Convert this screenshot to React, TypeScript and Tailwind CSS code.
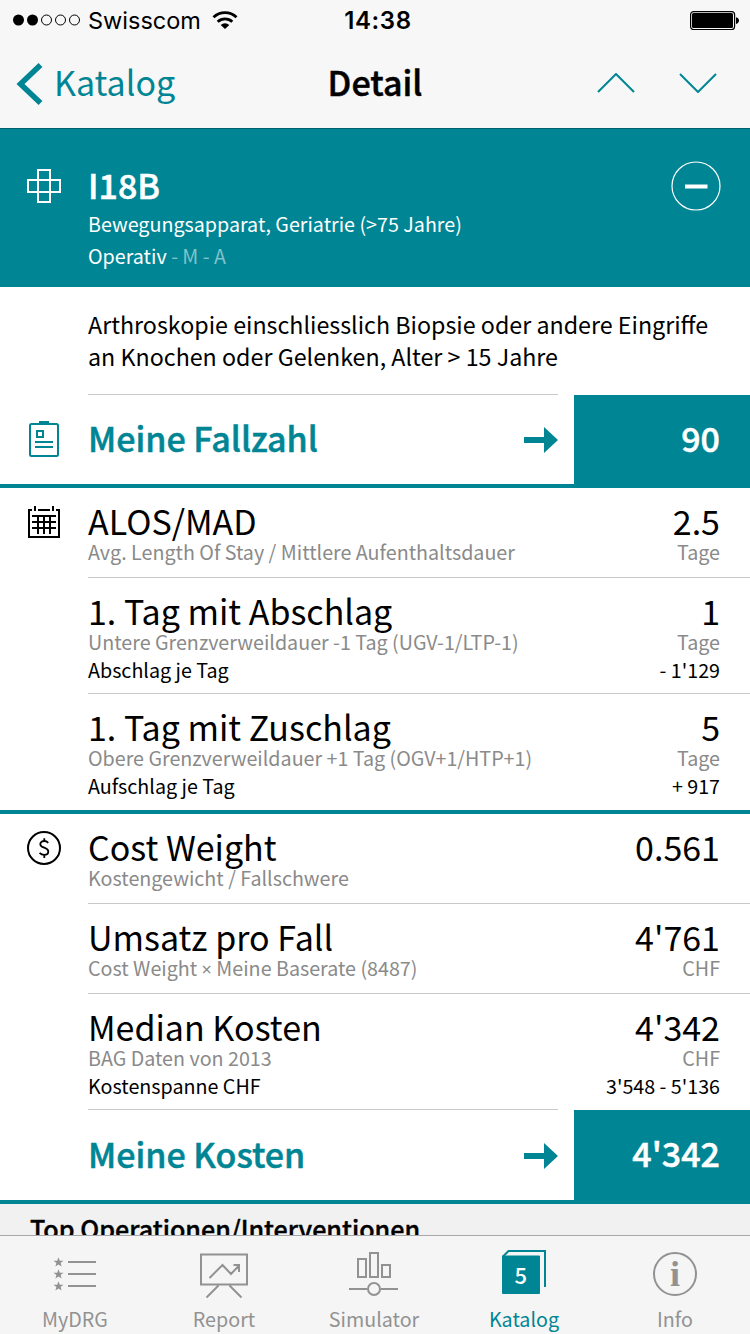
import type { ReactNode } from "react";

// ── Data ─────────────────────────────────────────────────────────────────────
type Row = {
  title: string;
  sub: ReactNode;
  value: string;
  unit?: string;
  extra?: [string, string];
};

const STAY_ROWS: Row[] = [
  {
    title: "ALOS/MAD",
    sub: "Avg. Length Of Stay / Mittlere Aufenthaltsdauer",
    value: "2.5",
    unit: "Tage",
  },
  {
    title: "1. Tag mit Abschlag",
    sub: "Untere Grenzverweildauer -1 Tag (UGV-1/LTP-1)",
    value: "1",
    unit: "Tage",
    extra: ["Abschlag je Tag", "- 1'129"],
  },
  {
    title: "1. Tag mit Zuschlag",
    sub: "Obere Grenzverweildauer +1 Tag (OGV+1/HTP+1)",
    value: "5",
    unit: "Tage",
    extra: ["Aufschlag je Tag", "+ 917"],
  },
];

const COST_ROWS: Row[] = [
  { title: "Cost Weight", sub: "Kostengewicht / Fallschwere", value: "0.561" },
  {
    title: "Umsatz pro Fall",
    // the CJK family draws × full width, so take it from a latin one
    sub: (
      <>
        Cost Weight <span className="font-['Noto_Sans',sans-serif] text-[18px] leading-none">×</span> Meine Baserate
        (8487)
      </>
    ),
    value: "4'761",
    unit: "CHF",
  },
  {
    title: "Median Kosten",
    sub: "BAG Daten von 2013",
    value: "4'342",
    unit: "CHF",
    extra: ["Kostenspanne CHF", "3'548 - 5'136"],
  },
];

// ── Icons ────────────────────────────────────────────────────────────────────
function CrossIcon() {
  return (
    <svg width="36" height="36" viewBox="0 0 36 36" fill="none" stroke="white" strokeWidth="2">
      <path d="M12 2h12v32H12zM2 12h32v12H2z" />
    </svg>
  );
}

function ClipboardIcon() {
  return (
    <svg width="32" height="38" viewBox="0 0 32 38" fill="none" stroke="#008594" strokeWidth="2">
      <rect x="2" y="4" width="28" height="32" rx="1.5" />
      <path d="M11 2.500h10" strokeWidth="3" />
      <path d="M9 11h6v6H9zM7 22h18M7 27h18" />
    </svg>
  );
}

function CalendarIcon() {
  return (
    <svg width="32" height="32" viewBox="0 0 32 32" fill="none" stroke="black" strokeWidth="2">
      <path d="M4 4H1v27h30V4h-3M10 4h12M7 0v5M25 0v5" />
      <path d="M4 10h24M4 16h24M4 22h24M10 10v18M16 10v18M22 10v18" />
    </svg>
  );
}

function DollarIcon() {
  return (
    <svg width="34" height="34" viewBox="0 0 34 34">
      <circle cx="17" cy="17" r="16" fill="none" stroke="black" strokeWidth="2" />
      <path
        d="M21.2 11.800c-1-1.200-2.400-1.800-4-1.800-2.200 0-3.900 1.300-3.900 3.200 0 4.200 8 2.800 8 7.200 0 2-1.700 3.400-4.100 3.400-1.900 0-3.400-.7-4.600-2M17.300 7.200V10M17.300 24v3"
        fill="none"
        stroke="black"
        strokeWidth="1.800"
      />
    </svg>
  );
}

function ArrowIcon() {
  return (
    <svg width="34" height="26" viewBox="0 0 34 26" fill="#008594">
      <path d="M0 10h20V0l14 13-14 13V16H0z" />
    </svg>
  );
}

// ── Tab bar icons, all drawn on a 52x50 grid ─────────────────────────────────
const STAR = "M0-5 1.300-1.600 5-1.500 2.100.7 3.100 4.300 0 2.200-3.100 4.300-2.100.7-5-1.500-1.300-1.600z";

const TABS: { label: string; active?: boolean; icon: ReactNode }[] = [
  {
    label: "MyDRG",
    icon: (
      <>
        {[12, 24, 36].map((y) => (
          <g key={y}>
            <path d={STAR} transform={`translate(9.500 ${y + 0.3})`} fill="currentColor" stroke="none" />
            <path d={`M19 ${y}h28`} />
          </g>
        ))}
      </>
    ),
  },
  {
    label: "Report",
    icon: (
      <>
        <path d="M3 4.500h46v30H3zM20.500 35.500 8.500 47.500M31.500 35.500l12 12" />
        <path d="M11.500 28 24.500 15l8.500 9 8.500-9M35.500 15H41v7" />
      </>
    ),
  },
  {
    label: "Simulator",
    icon: (
      <>
        <path d="M10 9h8v18h-8zM22 3h8v24h-8zM34 15h8v12h-8zM1 39h18M33 39h17" />
        <circle cx="26" cy="39" r="6" />
      </>
    ),
  },
  {
    label: "Katalog",
    active: true,
    icon: (
      <>
        <rect x="4" y="5.500" width="38" height="38.500" rx="1" fill="currentColor" stroke="none" />
        <path d="M5 6.500 10.500 1H47v36" />
        <text
          x="22.800"
          y="34"
          textAnchor="middle"
          fill="white"
          stroke="none"
          className="font-['Noto_Sans_CJK_SC',sans-serif] text-[22px] font-medium"
        >
          5
        </text>
      </>
    ),
  },
  {
    label: "Info",
    icon: (
      <>
        <circle cx="26" cy="24" r="21" />
        <text
          x="26"
          y="36"
          textAnchor="middle"
          fill="currentColor"
          stroke="none"
          className="font-['Liberation_Serif',serif] text-[36px] font-bold"
        >
          i
        </text>
      </>
    ),
  },
];

// ── Building blocks ──────────────────────────────────────────────────────────
function StatusBar() {
  return (
    <div className="grid h-10 grid-cols-3 items-center font-['Inter',sans-serif] text-2xl leading-[38px]">
      <div className="flex items-center pl-[13px]">
        <svg width="68" height="12" viewBox="0 0 68 12" className="mr-[7px] shrink-0">
          <circle cx="5.500" cy="6" r="5.500" />
          <circle cx="19.500" cy="6" r="5.500" />
          {[33.5, 47.5, 61.5].map((cx) => (
            <circle key={cx} cx={cx} cy="6" r="5" fill="none" stroke="black" />
          ))}
        </svg>
        <span className="pt-0.5 text-[23.500px]">Swisscom</span>
        <svg width="26" height="20" viewBox="0 0 26 20" className="ml-[11px] shrink-0">
          <g fill="none" stroke="black" strokeWidth="2.800">
            <path d="M1.500 7.300a16.500 16.500 0 0 1 23 0" />
            <path d="M5.700 11.800a10.600 10.600 0 0 1 14.600 0" />
          </g>
          <path d="M13 19 8.700 14.900a6.300 6.300 0 0 1 8.600 0z" />
        </svg>
      </div>
      <div className="pt-0.5 pl-[6px] text-center font-semibold tracking-wide">14:38</div>
      <div className="flex justify-end pr-[11px]">
        <svg width="49" height="20" viewBox="0 0 49 20">
          <rect x=".600" y="1.600" width="44" height="18" rx="3" fill="none" stroke="black" strokeWidth="1.200" />
          <rect x="2" y="3" width="41" height="15" rx="1.500" />
          <path d="M46 7.200c2 .5 3 1.800 3 3.400s-1 2.900-3 3.400z" />
        </svg>
      </div>
    </div>
  );
}

function NavBar() {
  return (
    <div className="grid h-[88px] grid-cols-3 items-center">
      <div className="flex items-center gap-[11px] pl-4 text-[#008594]">
        <svg width="27" height="42" viewBox="0 0 27 42" fill="none" stroke="currentColor" strokeWidth="5.500">
          <path d="M24.500 2 4.500 21l20 19" />
        </svg>
        <span className="pb-[5px] text-[34px] leading-[38px]">Katalog</span>
      </div>
      <div className="pb-[5px] text-center text-[34px] leading-[38px] font-medium [-webkit-text-stroke:0.5px]">
        Detail
      </div>
      <div className="flex justify-end gap-11 pr-[33px] pb-0.5">
        <svg width="38" height="20" viewBox="0 0 38 20" fill="none" stroke="#008594" strokeWidth="2">
          <path d="M1 19 19 1l18 18" />
        </svg>
        <svg width="38" height="20" viewBox="0 0 38 20" fill="none" stroke="#008594" strokeWidth="2">
          <path d="M1 1l18 18L37 1" />
        </svg>
      </div>
    </div>
  );
}

function DetailRow({ row, last }: { row: Row; last?: boolean }) {
  return (
    <div
      className={`pt-3.5 pr-[30px] ${row.extra ? "h-[116px]" : "h-[90px]"} ${
        last ? "" : "border-b border-[#c8c7cc]"
      }`}
    >
      <div className="flex justify-between text-[34px] leading-[38px]">
        <span>{row.title}</span>
        <span>{row.value}</span>
      </div>
      <div className="flex justify-between text-[19.700px] leading-[23px] text-[#8a8a8a]">
        <span>{row.sub}</span>
        <span>{row.unit}</span>
      </div>
      {row.extra && (
        <div className="flex justify-between text-[19.700px] leading-[33px]">
          <span>{row.extra[0]}</span>
          <span>{row.extra[1]}</span>
        </div>
      )}
    </div>
  );
}

function LinkRow({ icon, label, value, tall }: { icon?: ReactNode; label: string; value: string; tall?: boolean }) {
  return (
    <div
      className={`flex border-b-4 border-[#008594] text-[34px] leading-[38px] font-medium [-webkit-text-stroke:0.5px] ${
        tall ? "h-[95px]" : "h-[94px]"
      }`}
    >
      <div className="flex w-[88px] justify-center pt-[26px]">{icon}</div>
      <div
        className={`flex w-[470px] items-center justify-between border-t border-[#c8c7cc] text-[#008594] ${
          tall ? "h-[93px]" : "h-[91px]"
        }`}
      >
        <span className="pb-[5px]">{label}</span>
        <ArrowIcon />
      </div>
      <div
        className={`mt-px ml-4 flex flex-1 items-center justify-end bg-[#008594] pr-[30px] text-white ${
          tall ? "pb-[5px]" : "pb-1"
        }`}
      >
        {value}
      </div>
    </div>
  );
}

function Section({ icon, rows }: { icon: ReactNode; rows: Row[] }) {
  return (
    <div className="flex">
      <div className="flex w-[88px] shrink-0 justify-center">{icon}</div>
      <div className="flex-1">
        {rows.map((row, i) => (
          <DetailRow key={row.title} row={row} last={i === rows.length - 1} />
        ))}
      </div>
    </div>
  );
}

// ── Screen ───────────────────────────────────────────────────────────────────
export default function App() {
  return (
    <div className="flex h-[1334px] w-[750px] flex-col overflow-hidden bg-white font-['Noto_Sans_CJK_SC',sans-serif] text-black">
      <header className="bg-[#f7f7f7]">
        <StatusBar />
        <NavBar />
      </header>

      {/* DRG header */}
      <div className="flex h-[159px] shrink-0 border-t border-[#00606b] bg-[#008594] text-white">
        <div className="flex w-[88px] justify-center pt-[39px]">
          <CrossIcon />
        </div>
        <div className="flex-1 pt-[37px]">
          <div className="text-[34px] leading-[38px] font-medium [-webkit-text-stroke:0.5px]">I18B</div>
          <div className="pt-1 text-[19.700px] leading-8">Bewegungsapparat, Geriatrie (&gt;75 Jahre)</div>
          <div className="text-[19.700px] leading-8">
            Operativ <span className="text-white/50">- M - A</span>
          </div>
        </div>
        <div className="pt-8 pr-[29px]">
          <svg width="50" height="50" viewBox="0 0 50 50" fill="none" stroke="white">
            <circle cx="25" cy="25" r="24" strokeWidth="1.200" />
            <path d="M14 25.500h22.500" strokeWidth="4" />
          </svg>
        </div>
      </div>

      <p className="h-[107px] shrink-0 pt-[21px] pl-[88px] text-[23.250px] leading-8">
        Arthroskopie einschliesslich Biopsie oder andere Eingriffe
        <br />
        an Knochen oder Gelenken, Alter &gt; 15 Jahre
      </p>

      <LinkRow icon={<ClipboardIcon />} label="Meine Fallzahl" value="90" />
      <div className="border-b-4 border-[#008594]">
        <Section
          icon={
            <div className="pt-[18px]">
              <CalendarIcon />
            </div>
          }
          rows={STAY_ROWS}
        />
      </div>
      <div className="-mb-px">
        <Section
          icon={
            <div className="pt-[17px]">
              <DollarIcon />
            </div>
          }
          rows={COST_ROWS}
        />
      </div>
      <LinkRow label="Meine Kosten" value="4'342" tall />

      <div className="h-[31px] shrink-0 overflow-hidden bg-[#f1f1f1] pt-1.5 pl-[30px] text-[25.100px] leading-9 font-medium [-webkit-text-stroke:0.4px]">
        Top Operationen/Interventionen
      </div>

      {/* Tab bar */}
      <nav className="grid h-[99px] shrink-0 grid-cols-[150px_148px_152px_148px_152px] border-t border-[#a7a7aa] bg-[#f5f5f5]">
        {TABS.map((tab) => (
          <div
            key={tab.label}
            className={`flex flex-col items-center pt-3.5 text-[19.700px] leading-9 ${
              tab.active ? "text-[#008594]" : "text-[#929292]"
            } ${tab.label === "Info" ? "pl-0.5" : ""}`}
          >
            <svg
              width="52"
              height="50"
              viewBox="0 0 52 50"
              fill="none"
              stroke="currentColor"
              strokeWidth="2"
              className="shrink-0"
            >
              {tab.icon}
            </svg>
            <span className="pt-px">{tab.label}</span>
          </div>
        ))}
      </nav>
    </div>
  );
}
